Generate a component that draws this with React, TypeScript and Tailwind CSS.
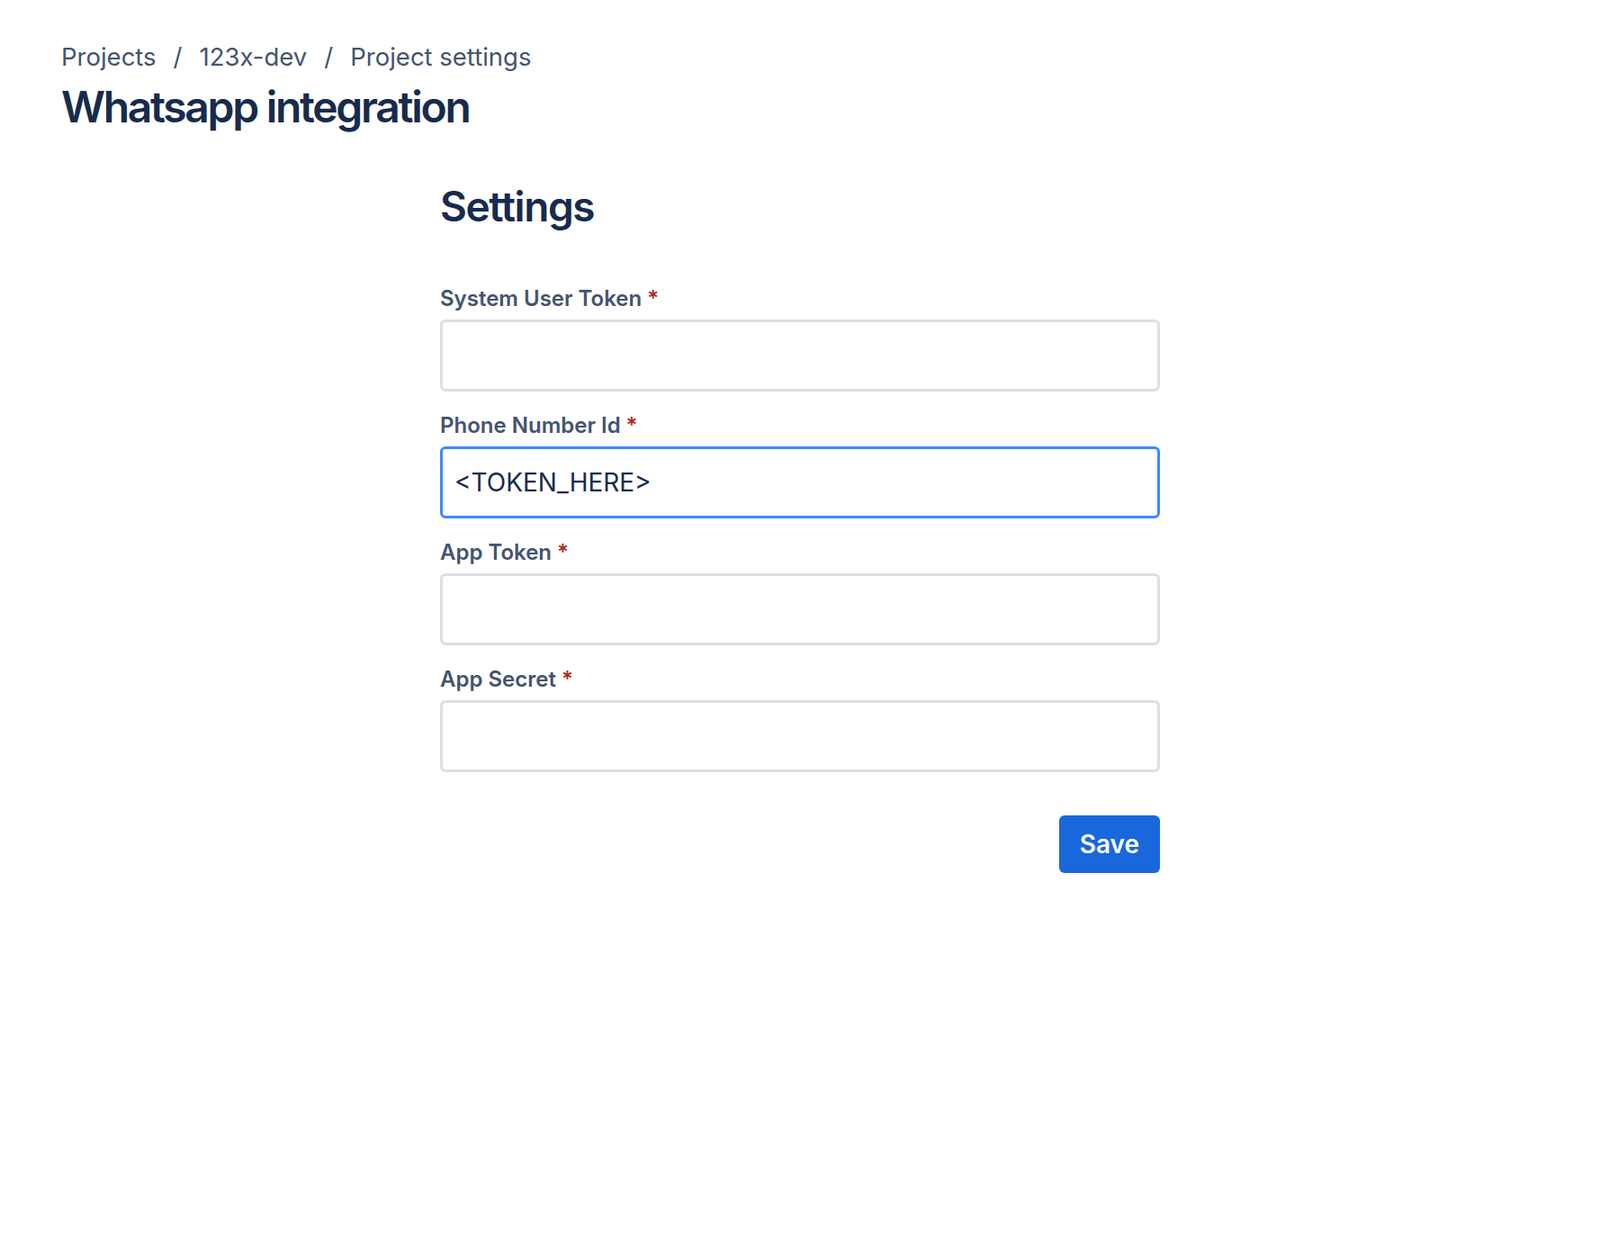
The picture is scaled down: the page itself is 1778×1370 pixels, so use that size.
import { useState } from 'react';

const fields = [
  { id: 'systemUserToken', label: 'System User Token' },
  { id: 'phoneNumberId', label: 'Phone Number Id' },
  { id: 'appToken', label: 'App Token' },
  { id: 'appSecret', label: 'App Secret' },
];

export default function App() {
  const [values, setValues] = useState<Record<string, string>>({
    phoneNumberId: '<TOKEN_HERE>',
  });

  return (
    <div className="min-h-screen bg-white px-[68px] pt-[43px] font-['Inter',sans-serif]">
      <nav className="flex items-center text-[27.5px] leading-[40px] text-[#44546F]">
        <span>Projects</span>
        <span className="px-[19px]">/</span>
        <span>123x-dev</span>
        <span className="px-[19px]">/</span>
        <span>Project settings</span>
      </nav>
      <h1 className="mt-[8px] text-[48px] leading-[56px] font-semibold tracking-[-2.3px] text-[#172B4D]">
        Whatsapp integration
      </h1>

      <div className="mx-auto mt-[54px] w-[800px]">
        <h2 className="text-[46px] leading-[56px] font-semibold tracking-[-1.4px] text-[#172B4D]">
          Settings
        </h2>

        <form className="mt-[59px] flex flex-col gap-[22px]" onSubmit={(e) => e.preventDefault()}>
          {fields.map((f) => (
            <div key={f.id}>
              <label
                htmlFor={f.id}
                className="mb-[7px] block text-[24px] leading-[32px] font-semibold text-[#44546F]"
              >
                {f.label}
                <span className="ml-[6px] text-[#AE2E24]">*</span>
              </label>
              <input
                id={f.id}
                value={values[f.id] ?? ''}
                onChange={(e) => setValues({ ...values, [f.id]: e.target.value })}
                className={
                  f.id === 'phoneNumberId'
                    ? 'block h-[80px] w-full rounded-[6px] border-[3px] border-[#388BFF] bg-white px-[13px] text-[28px] text-[#172B4D] outline-none'
                    : 'block h-[80px] w-full rounded-[6px] border-[3px] border-[#DCDFE4] bg-white px-[13px] text-[28px] text-[#172B4D] outline-none'
                }
              />
            </div>
          ))}

          <div className="mt-[26px] flex justify-end">
            <button
              type="submit"
              className="h-[64px] rounded-[6px] bg-[#1868DB] px-[23px] text-[28px] font-semibold text-white"
            >
              Save
            </button>
          </div>
        </form>
      </div>
    </div>
  );
}
